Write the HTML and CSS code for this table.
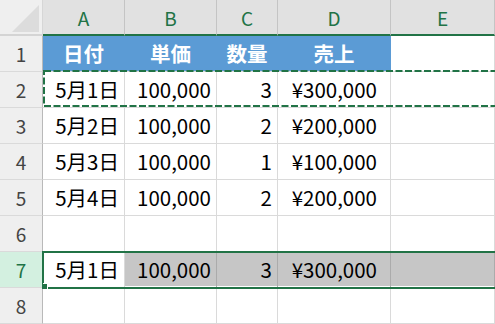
FILE: index.html
```html
<!DOCTYPE html>
<html lang="ja">
<head>
<meta charset="utf-8">
<link rel="stylesheet" href="styles.css">
</head>
<body>
<div class="sheet">
  <div class="corner"><span class="tri"></span></div>
  <div class="colh">A</div><div class="colh">B</div><div class="colh">C</div><div class="colh">D</div><div class="colh">E</div>

  <div class="rowh">1</div>
  <div class="cell hd">日付</div><div class="cell hd">単価</div><div class="cell hd">数量</div><div class="cell hd">売上</div><div class="cell"></div>

  <div class="rowh">2</div>
  <div class="cell r">5月1日</div><div class="cell r">100,000</div><div class="cell r">3</div><div class="cell yen">¥300,000</div><div class="cell"></div>

  <div class="rowh">3</div>
  <div class="cell r">5月2日</div><div class="cell r">100,000</div><div class="cell r">2</div><div class="cell yen">¥200,000</div><div class="cell"></div>

  <div class="rowh">4</div>
  <div class="cell r">5月3日</div><div class="cell r">100,000</div><div class="cell r">1</div><div class="cell yen">¥100,000</div><div class="cell"></div>

  <div class="rowh">5</div>
  <div class="cell r">5月4日</div><div class="cell r">100,000</div><div class="cell r">2</div><div class="cell yen">¥200,000</div><div class="cell"></div>

  <div class="rowh">6</div>
  <div class="cell"></div><div class="cell"></div><div class="cell"></div><div class="cell"></div><div class="cell"></div>

  <div class="rowh active">7</div>
  <div class="cell r">5月1日</div><div class="cell r gray">100,000</div><div class="cell r gray">3</div><div class="cell yen gray">¥300,000</div><div class="cell gray"></div>

  <div class="rowh">8</div>
  <div class="cell"></div><div class="cell"></div><div class="cell"></div><div class="cell"></div><div class="cell"></div>

  <svg class="marquee" width="470" height="38" viewBox="0 0 470 38">
    <rect x="1" y="1" width="480" height="35" fill="none" stroke="#217346" stroke-width="2" stroke-dasharray="7 2.5"/>
  </svg>
  <div class="sel"><span class="handle"></span></div>
</div>
</body>
</html>
```

FILE: styles.css
```css
html, body {
  margin: 0;
  padding: 0;
  background: #fff;
  overflow: hidden;
}
body {
  width: 495px;
  height: 324px;
  font-family: "Noto Sans CJK JP", "Noto Sans", sans-serif;
}
.sheet {
  position: relative;
  display: grid;
  grid-template-columns: 43px 82px 92px 61px 113px 104px;
  grid-template-rows: repeat(9, 36px);
  width: 495px;
  overflow: hidden;
}
.sheet > div {
  box-sizing: border-box;
}
.corner {
  position: relative;
  background: #efefef;
  border-right: 1px solid #d6d6d6;
  border-bottom: 2px solid #d4d4d4;
}
.tri {
  position: absolute;
  right: 3px;
  bottom: 2px;
  width: 27px;
  height: 27px;
  background: #dcdcdc;
  clip-path: polygon(100% 0, 100% 100%, 0 100%);
}
.colh {
  background: #e1e1e1;
  color: #217346;
  font-size: 19px;
  display: flex;
  align-items: center;
  justify-content: center;
  border-right: 1px solid #c4c4c4;
  border-bottom: 2px solid #217346;
  padding-top: 1px;
}
.rowh {
  background: #efefef;
  color: #444;
  font-size: 19px;
  display: flex;
  align-items: center;
  justify-content: center;
  border-right: 1px solid #b9b9b9;
  border-bottom: 1px solid #dadada;
}
.rowh.active {
  background: #d3f0e0;
  color: #217346;
}
.cell {
  font-size: 20.5px;
  color: #000;
  display: flex;
  align-items: center;
  border-right: 1px solid #dadada;
  border-bottom: 1px solid #dadada;
  white-space: nowrap;
  padding-bottom: 1px;
}
.cell.r {
  justify-content: flex-end;
  padding-right: 5px;
}
.cell.yen {
  justify-content: flex-end;
  padding-right: 13px;
}
.cell.hd {
  background: #5b9bd5;
  color: #fff;
  font-weight: bold;
  justify-content: center;
  border-right-color: #5b9bd5;
}
.cell.gray {
  background: #c6c6c6;
  border-right-color: #ababab;
  box-shadow: inset 0 -1px 0 #fff;
}
.marquee {
  position: absolute;
  left: 43px;
  top: 70px;
}
.sel {
  position: absolute;
  left: 42px;
  top: 251px;
  width: 470px;
  height: 38px;
  box-sizing: border-box;
  border: 2px solid #217346;
  border-right: none;
}
.handle {
  position: absolute;
  left: -2px;
  bottom: -2px;
  width: 5px;
  height: 5px;
  background: #217346;
  box-shadow: 1px -1px 0 #fff, 1px 0 0 #fff;
}
```
